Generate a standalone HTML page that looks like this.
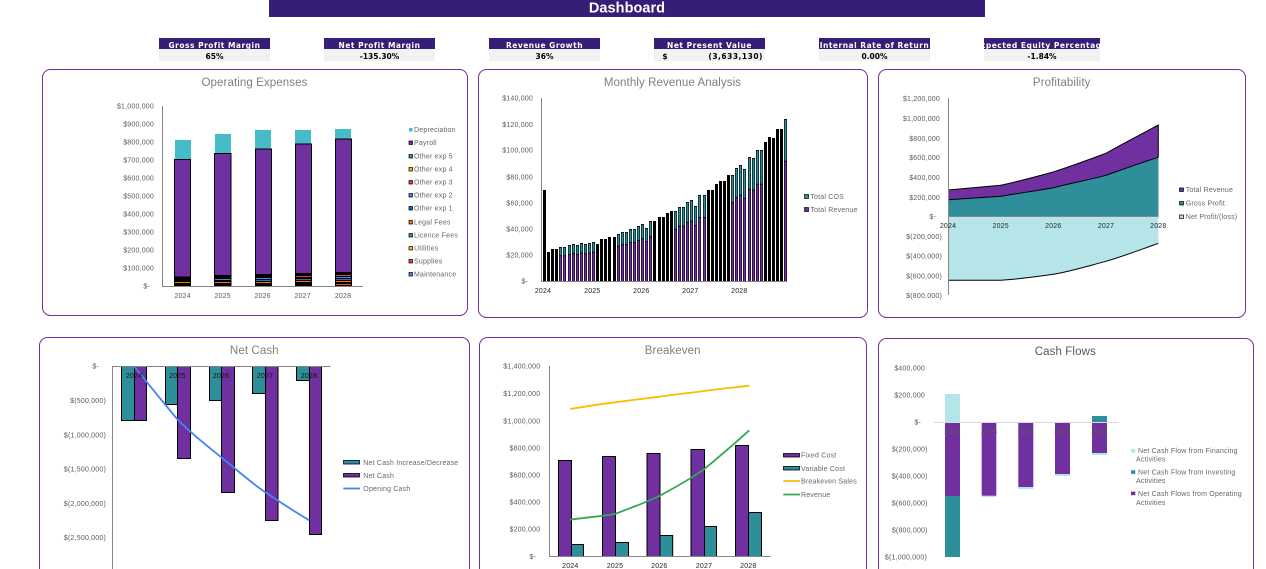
<!DOCTYPE html>
<html lang="en"><head><meta charset="utf-8"><title>Dashboard</title>
<style>
html,body{margin:0;padding:0;background:#fff;width:1266px;height:569px;overflow:hidden}
svg{display:block;position:absolute;left:0;top:0}
text{font-family:"Liberation Sans",Arial,sans-serif;font-size:7px;fill:#595959;letter-spacing:.2px}
.r{text-anchor:end}
.m{text-anchor:middle}
.t{font-size:11.5px;fill:#7f7f7f;text-anchor:middle;letter-spacing:.1px}
.l{fill:#666}
.k{font-family:"DejaVu Sans",sans-serif;font-weight:700;font-size:7.5px;text-anchor:middle;letter-spacing:0}
.kh{fill:#fff;letter-spacing:.5px}
.kv{fill:#000}
.card{fill:#fff;stroke:#7030a0;stroke-width:1}
.ax{stroke:#868686;stroke-width:1;fill:none}
.d{fill:#262626}
</style></head><body>
<svg width="1266" height="569" viewBox="0 0 1266 569" xmlns="http://www.w3.org/2000/svg">
<defs><clipPath id="kc"><rect x="984" y="38" width="116" height="11"/></clipPath></defs>
<!-- Header -->
<rect x="269" y="0" width="716" height="17" fill="#361d75"/>
<text x="627" y="12.5" class="m" style="font-size:14.5px;font-weight:700;fill:#fff;letter-spacing:.05px">Dashboard</text>
<!-- KPIs -->
<g fill="#361d75">
<rect x="159" y="38" width="111" height="11"/><rect x="324" y="38" width="111" height="11"/><rect x="489" y="38" width="111" height="11"/><rect x="654" y="38" width="111" height="11"/><rect x="819" y="38" width="111" height="11"/><rect x="984" y="38" width="116" height="11"/>
</g>
<g fill="#f2f2f2">
<rect x="159" y="49" width="111" height="12"/><rect x="324" y="49" width="111" height="12"/><rect x="489" y="49" width="111" height="12"/><rect x="654" y="49" width="111" height="12"/><rect x="819" y="49" width="111" height="12"/><rect x="984" y="49" width="116" height="12"/>
</g>
<text x="214.5" y="48" class="k kh">Gross Profit Margin</text>
<text x="379.5" y="48" class="k kh">Net Profit Margin</text>
<text x="544.5" y="48" class="k kh">Revenue Growth</text>
<text x="709.5" y="48" class="k kh">Net Present Value</text>
<text x="874.5" y="48" class="k kh">Internal Rate of Return</text>
<g clip-path="url(#kc)"><text x="1041" y="48" class="k kh">Expected Equity Percentage</text></g>
<text x="214.5" y="59" class="k kv">65%</text>
<text x="379.5" y="59" class="k kv">-135.30%</text>
<text x="544.5" y="59" class="k kv">36%</text>
<text x="665" y="59" class="k kv">$</text>
<text x="763" y="59" class="k kv" style="text-anchor:end;letter-spacing:.5px">(3,633,130)</text>
<text x="874.5" y="59" class="k kv">0.00%</text>
<text x="1042" y="59" class="k kv">-1.84%</text>

<!-- Cards -->
<rect class="card" x="42.5" y="69.5" width="425" height="246" rx="8"/>
<rect class="card" x="478.5" y="69.5" width="389" height="248" rx="8"/>
<rect class="card" x="878.5" y="69.5" width="367" height="248" rx="8"/>
<path class="card" d="M39.5 569V345.5a8 8 0 0 1 8-8H461.5a8 8 0 0 1 8 8V569"/>
<path class="card" d="M479.5 569V345.5a8 8 0 0 1 8-8H858.5a8 8 0 0 1 8 8V569"/>
<path class="card" d="M878.5 569V346.5a8 8 0 0 1 8-8H1245.5a8 8 0 0 1 8 8V569"/>

<!-- Operating Expenses -->
<text x="254.5" y="86" class="t">Operating Expenses</text>
<g class="r">
<text x="154" y="108.5" class="r">$1,000,000</text><text x="154" y="126.5" class="r">$900,000</text><text x="154" y="144.5" class="r">$800,000</text><text x="154" y="162.5" class="r">$700,000</text><text x="154" y="180.5" class="r">$600,000</text><text x="154" y="198.5" class="r">$500,000</text><text x="154" y="216.5" class="r">$400,000</text><text x="154" y="234.5" class="r">$300,000</text><text x="154" y="252.5" class="r">$200,000</text><text x="154" y="270.5" class="r">$100,000</text><text x="150" y="288.5" class="r">$-</text>
</g>
<g fill="#45bcc7">
<rect x="175" y="140" width="16" height="19"/><rect x="215" y="134" width="16" height="20"/><rect x="255" y="130" width="16" height="19"/><rect x="295" y="130" width="16" height="14"/><rect x="335" y="129" width="16" height="10"/>
</g>
<g fill="#000">
<rect x="174" y="159" width="17" height="127"/><rect x="214" y="153" width="17.5" height="133"/><rect x="255" y="148.5" width="17" height="137.5"/><rect x="295" y="143.5" width="17" height="142.5"/><rect x="335" y="138.5" width="17" height="147.5"/>
</g>
<g fill="#7030a0">
<rect x="175" y="160" width="15" height="116.5"/><rect x="215" y="154" width="15.5" height="121"/><rect x="256" y="149.5" width="15" height="124.5"/><rect x="296" y="144.5" width="15" height="128.5"/><rect x="336" y="139.5" width="15" height="132.5"/>
</g>
<g stroke-width="1" fill="none">
<path d="M175 282.5h15M215 282.5h15.5M256 282.5h15M296 281.5h15M336 281.5h15" stroke="#ff6d01"/>
<path d="M215 279.5h15.5M256 278.5h15" stroke="#4285f4"/>
<path d="M256 280.5h15M296 279.5h15M336 279.5h15" stroke="#1a78c2"/>
<path d="M296 276.5h15M336 275.5h15" stroke="#ea4335"/>
<path d="M336 277.5h15" stroke="#4285f4"/>
<path d="M336 284.5h15" stroke="#e8522f"/>
</g>
<path class="ax" d="M162.5 106V286.5H363"/>
<text x="182.7" y="298" class="m">2024</text><text x="222.7" y="298" class="m">2025</text><text x="262.7" y="298" class="m">2026</text><text x="302.7" y="298" class="m">2027</text><text x="343" y="298" class="m">2028</text>
<g stroke="#000" stroke-width=".7">
<rect x="409" y="128" width="3.5" height="3.5" fill="#45bcc7" stroke="none"/>
<rect x="409" y="141" width="3.5" height="3.5" fill="#7030a0"/>
<rect x="409" y="154.5" width="3.5" height="3.5" fill="#34a853"/>
<rect x="409" y="167.5" width="3.5" height="3.5" fill="#fbbc04"/>
<rect x="409" y="180.5" width="3.5" height="3.5" fill="#ea4335"/>
<rect x="409" y="193.5" width="3.5" height="3.5" fill="#4285f4"/>
<rect x="409" y="206.5" width="3.5" height="3.5" fill="#0a6ebd"/>
<rect x="409" y="220.5" width="3.5" height="3.5" fill="#ff6d01"/>
<rect x="409" y="233.5" width="3.5" height="3.5" fill="#34a853"/>
<rect x="409" y="246.5" width="3.5" height="3.5" fill="#fbbc04"/>
<rect x="409" y="259.5" width="3.5" height="3.5" fill="#ea4335"/>
<rect x="409" y="272.5" width="3.5" height="3.5" fill="#4285f4"/>
</g>
<text x="414" y="132" class="l">Depreciation</text><text x="414" y="145" class="l">Payroll</text><text x="414" y="158.5" class="l">Other exp 5</text><text x="414" y="171.5" class="l">Other exp 4</text><text x="414" y="184.5" class="l">Other exp 3</text><text x="414" y="197.5" class="l">Other exp 2</text><text x="414" y="210.5" class="l">Other exp 1</text><text x="414" y="224.5" class="l">Legal Fees</text><text x="414" y="237.5" class="l">Licence Fees</text><text x="414" y="250.5" class="l">Utilities</text><text x="414" y="263.5" class="l">Supplies</text><text x="414" y="276.5" class="l">Maintenance</text>

<!-- Monthly Revenue -->
<text x="672.5" y="86" class="t">Monthly Revenue Analysis</text>
<text x="533" y="100.5" class="r">$140,000</text><text x="533" y="127" class="r">$120,000</text><text x="533" y="152.7" class="r">$100,000</text><text x="533" y="179.7" class="r">$80,000</text><text x="533" y="205.7" class="r">$60,000</text><text x="533" y="231.7" class="r">$40,000</text><text x="533" y="257.7" class="r">$20,000</text><text x="528" y="283.7" class="r">$-</text>
<path fill="#000" d="M543 190h3V281h-3zM547 252h3V281h-3zM551 249h3V281h-3zM555 249h3V281h-3zM559 247h3V281h-3zM563 247h3V281h-3zM568 245h3V281h-3zM572 244h3V281h-3zM576 245h3V281h-3zM580 243h3V281h-3zM584 244h3V281h-3zM588 243h3V281h-3zM592 242h3V281h-3zM596 244h3V281h-3zM600 239h3V281h-3zM604 239h3V281h-3zM608 237h3V281h-3zM613 237h3V281h-3zM617 234h3V281h-3zM621 232h3V281h-3zM625 232h3V281h-3zM629 229h3V281h-3zM633 229h3V281h-3zM637 226h3V281h-3zM641 224h3V281h-3zM645 228h3V281h-3zM649 221h3V281h-3zM653 221h3V281h-3zM658 217h3V281h-3zM662 217h3V281h-3zM666 213h3V281h-3zM670 211h3V281h-3zM674 211h3V281h-3zM678 207h3V281h-3zM682 207h3V281h-3zM686 202h3V281h-3zM690 200h3V281h-3zM694 206h3V281h-3zM698 195h3V281h-3zM703 195h3V281h-3zM707 190h3V281h-3zM711 190h3V281h-3zM715 184h3V281h-3zM719 181h3V281h-3zM723 181h3V281h-3zM727 175h3V281h-3zM731 175h3V281h-3zM735 168h3V281h-3zM739 165h3V281h-3zM743 169h3V281h-3zM748 157h3V281h-3zM752 158h3V281h-3zM756 150h3V281h-3zM760 150h3V281h-3zM764 142h3V281h-3zM768 137h3V281h-3zM772 138h3V281h-3zM776 129h3V281h-3zM780 129h3V281h-3zM784 119h3V281h-3z"/>
<path fill="none" stroke="#2e8f9a" stroke-width="1.8" d="M560.5 247.8V255.4M564.5 247.8V255.4M569.5 245.8V254M573.5 244.8V253.2M577.5 245.8V254M581.5 243.8V252.5M585.5 244.8V253.2M589.5 243.8V252.5M593.5 242.8V251.7M618.5 234.8V245.8M622.5 232.8V244.3M626.5 232.8V244.3M630.5 229.8V242.1M634.5 229.8V242.1M638.5 226.8V239.9M642.5 224.8V238.4M646.5 228.8V241.4M650.5 221.8V236.2M675.5 211.8V228.8M679.5 207.8V225.8M683.5 207.8V225.8M687.5 202.8V222.1M691.5 200.8V220.7M695.5 206.8V225.1M699.5 195.8V217M704.5 195.8V217M732.5 175.8V202.2M736.5 168.8V197M740.5 165.8V194.8M744.5 169.8V197.7M749.5 157.8V188.8M753.5 158.8V189.6M757.5 150.8V183.7M761.5 150.8V183.7M785.5 119.8V160.7"/>
<path fill="none" stroke="#7030a0" stroke-width="1.8" d="M560.5 256.3V281M564.5 256.3V281M569.5 254.9V281M573.5 254.1V281M577.5 254.9V281M581.5 253.4V281M585.5 254.1V281M589.5 253.4V281M593.5 252.6V281M618.5 246.7V281M622.5 245.2V281M626.5 245.2V281M630.5 243V281M634.5 243V281M638.5 240.8V281M642.5 239.3V281M646.5 242.3V281M650.5 237.1V281M675.5 229.7V281M679.5 226.7V281M683.5 226.7V281M687.5 223V281M691.5 221.6V281M695.5 226V281M699.5 217.9V281M704.5 217.9V281M732.5 203.1V281M736.5 197.9V281M740.5 195.7V281M744.5 198.6V281M749.5 189.7V281M753.5 190.5V281M757.5 184.6V281M761.5 184.6V281M785.5 161.6V281"/>
<path class="ax" d="M541.5 98V281.5H787"/>
<text x="543" y="293" class="m d">2024</text><text x="592.3" y="293" class="m d">2025</text><text x="641.3" y="293" class="m d">2026</text><text x="690.3" y="293" class="m d">2027</text><text x="739.3" y="293" class="m d">2028</text>
<rect x="804.5" y="194.5" width="4" height="4" fill="#2e8f9a" stroke="#000" stroke-width=".7"/>
<rect x="804.5" y="207.5" width="4" height="4" fill="#7030a0" stroke="#000" stroke-width=".7"/>
<text x="810.3" y="198.8" class="l">Total COS</text><text x="810.3" y="211.8" class="l">Total Revenue</text>

<!-- Profitability -->
<text x="1061.7" y="86" class="t">Profitability</text>
<text x="940" y="100.8" class="r">$1,200,000</text><text x="940" y="120.8" class="r">$1,000,000</text><text x="940" y="140.8" class="r">$800,000</text><text x="940" y="159.8" class="r">$600,000</text><text x="940" y="179.8" class="r">$400,000</text><text x="940" y="199.8" class="r">$200,000</text><text x="936" y="219.2" class="r">$-</text><text x="942" y="238.8" class="r">$(200,000)</text><text x="942" y="258.5" class="r">$(400,000)</text><text x="942" y="278.5" class="r">$(600,000)</text><text x="942" y="298.2" class="r">$(800,000)</text>
<path fill="#7030a0" d="M948.3 190L1000.7 185.3C1020 181 1035 177 1053.3 172C1072 166 1088 160 1106 153.3C1124 143 1140 135 1158.3 125V216.3H948.3Z"/>
<path fill="#2e8f9a" d="M948.3 199.7L1000.7 196.3C1020 193 1035 191 1053.3 187.7C1072 183 1088 180 1106 175.3C1124 169 1140 163 1158.3 157.3V216.3H948.3Z"/>
<path fill="#b5e5e9" d="M948.3 216.3H1158.3V243.3C1140 250 1124 256 1106 261.3C1088 266 1072 271 1053.3 274.3C1035 277 1018 279 1000.7 280.3H948.3Z"/>
<path fill="none" stroke="#000" stroke-width="1" d="M948.3 190L1000.7 185.3C1020 181 1035 177 1053.3 172C1072 166 1088 160 1106 153.3C1124 143 1140 135 1158.3 125V157.3"/>
<path fill="none" stroke="#000" stroke-width="1" d="M948.3 199.7L1000.7 196.3C1020 193 1035 191 1053.3 187.7C1072 183 1088 180 1106 175.3C1124 169 1140 163 1158.3 157.3"/>
<path fill="none" stroke="#000" stroke-width="1" d="M948.3 280.3H1000.7C1018 279 1035 277 1053.3 274.3C1072 271 1088 266 1106 261.3C1124 256 1140 250 1158.3 243.3"/>
<path class="ax" d="M948.5 98V295M948 216.5H1158.5"/>
<text x="948" y="228" class="m d">2024</text><text x="1000.7" y="228" class="m d">2025</text><text x="1053.3" y="228" class="m d">2026</text><text x="1106" y="228" class="m d">2027</text><text x="1158.3" y="228" class="m d">2028</text>
<g stroke="#000" stroke-width=".7"><rect x="1179.5" y="188" width="4" height="3.5" fill="#7030a0"/><rect x="1179.5" y="201.5" width="4" height="3.5" fill="#2e8f9a"/><rect x="1179.5" y="215" width="4" height="3.5" fill="#b5e5e9"/></g>
<text x="1185.7" y="192" class="l">Total Revenue</text><text x="1185.7" y="205.6" class="l">Gross Profit</text><text x="1185.7" y="219" class="l">Net Profit/(loss)</text>

<!-- Net Cash -->
<text x="254.3" y="354" class="t">Net Cash</text>
<text x="99" y="368.7" class="r">$-</text><text x="106" y="403" class="r">$(500,000)</text><text x="106" y="437.6" class="r">$(1,000,000)</text><text x="106" y="471.6" class="r">$(1,500,000)</text><text x="106" y="506" class="r">$(2,000,000)</text><text x="106" y="540" class="r">$(2,500,000)</text>
<g stroke="#000" stroke-width="1">
<rect x="121.5" y="366.5" width="13" height="54" fill="#2e8f9a"/><rect x="134.5" y="366.5" width="12" height="54" fill="#7030a0"/>
<rect x="165.5" y="366.5" width="12" height="38" fill="#2e8f9a"/><rect x="177.5" y="366.5" width="13" height="92" fill="#7030a0"/>
<rect x="209.5" y="366.5" width="12" height="34" fill="#2e8f9a"/><rect x="221.5" y="366.5" width="13" height="126" fill="#7030a0"/>
<rect x="252.5" y="366.5" width="13" height="27" fill="#2e8f9a"/><rect x="265.5" y="366.5" width="12.5" height="154" fill="#7030a0"/>
<rect x="296.5" y="366.5" width="13" height="14" fill="#2e8f9a"/><rect x="309.5" y="366.5" width="12" height="168" fill="#7030a0"/>
</g>
<path class="ax" d="M112.5 569V366.5H330.7"/>
<path fill="none" stroke="#4285f4" stroke-width="1.8" d="M134.3 366.3C148 384 164 403 177.3 419.3C192 434 206 445 221.3 457.3C236 469 250 482 265.3 492.3C280 502 295 512 309.3 520.3"/>
<g style="letter-spacing:.2px">
<text x="134" y="378" class="m" style="fill:#111">2024</text><text x="177.3" y="378" class="m" style="fill:#111">2025</text><text x="221" y="378" class="m" style="fill:#111">2026</text><text x="265" y="378" class="m" style="fill:#111">2027</text><text x="309" y="378" class="m" style="fill:#111">2028</text>
</g>
<rect x="343.5" y="460.5" width="16" height="3.5" fill="#2e8f9a" stroke="#000" stroke-width=".8"/>
<rect x="343.5" y="473.5" width="16" height="3.5" fill="#7030a0" stroke="#000" stroke-width=".8"/>
<path d="M343.3 488.5H360" stroke="#4285f4" stroke-width="1.8"/>
<text x="363.3" y="465" class="l">Net Cash Increase/Decrease</text><text x="363.3" y="478" class="l">Net Cash</text><text x="363.3" y="491" class="l">Opening Cash</text>

<!-- Breakeven -->
<text x="672.7" y="354" class="t">Breakeven</text>
<text x="540.3" y="368.7" class="r">$1,400,000</text><text x="540.3" y="396.2" class="r">$1,200,000</text><text x="540.3" y="423.7" class="r">$1,000,000</text><text x="540.3" y="450.7" class="r">$800,000</text><text x="540.3" y="477.7" class="r">$600,000</text><text x="540.3" y="504.7" class="r">$400,000</text><text x="540.3" y="531.7" class="r">$200,000</text><text x="536" y="559.2" class="r">$-</text>
<g stroke="#000" stroke-width="1">
<rect x="558.5" y="460.5" width="13" height="96" fill="#7030a0"/><rect x="571.5" y="544.5" width="12" height="12" fill="#2e8f9a"/>
<rect x="602.5" y="456.5" width="13" height="100" fill="#7030a0"/><rect x="615.5" y="542.5" width="13" height="14" fill="#2e8f9a"/>
<rect x="647" y="453.5" width="13" height="103" fill="#7030a0"/><rect x="660" y="535.5" width="12.7" height="21" fill="#2e8f9a"/>
<rect x="691" y="449.5" width="13.5" height="107" fill="#7030a0"/><rect x="704.5" y="526.5" width="12" height="30" fill="#2e8f9a"/>
<rect x="735.5" y="445.5" width="13" height="111" fill="#7030a0"/><rect x="748.5" y="512.5" width="13" height="44" fill="#2e8f9a"/>
</g>
<path class="ax" d="M549.5 366V556.5H770.7"/>
<path fill="none" stroke="#fbbc04" stroke-width="1.8" d="M570.3 409C585 406.5 600 404 615 402.3C630 400.5 645 398.5 659.3 396.7C674 394.5 689 393 704 391C719 389 734 387.5 749.3 385.7"/>
<path fill="none" stroke="#34a853" stroke-width="1.8" d="M570.3 519.7C585 517.5 600 516.5 615 514C630 508 645 503 659.3 496C674 488 689 480 704 469.3C719 457 734 444 749.3 430.3"/>
<text x="570.3" y="568" class="m d">2024</text><text x="615" y="568" class="m d">2025</text><text x="659.3" y="568" class="m d">2026</text><text x="704" y="568" class="m d">2027</text><text x="748.3" y="568" class="m d">2028</text>
<rect x="783.5" y="453.5" width="16" height="3.5" fill="#7030a0" stroke="#000" stroke-width=".8"/>
<rect x="783.5" y="466.5" width="16" height="3.5" fill="#2e8f9a" stroke="#000" stroke-width=".8"/>
<path d="M783.3 481H800" stroke="#fbbc04" stroke-width="1.8"/><path d="M783.3 494.5H800" stroke="#34a853" stroke-width="1.8"/>
<text x="801" y="457.5" class="l">Fixed Cost</text><text x="801" y="470.8" class="l">Variable Cost</text><text x="801" y="483.5" class="l">Breakeven Sales</text><text x="801" y="497" class="l">Revenue</text>

<!-- Cash Flows -->
<text x="1065.3" y="355" class="t" style="fill:#595959">Cash Flows</text>
<text x="925" y="370.7" class="r">$400,000</text><text x="925" y="397.7" class="r">$200,000</text><text x="921" y="424.7" class="r">$-</text><text x="927.7" y="451.7" class="r">$(200,000)</text><text x="927.7" y="478.7" class="r">$(400,000)</text><text x="927.7" y="505.7" class="r">$(600,000)</text><text x="927.7" y="532.7" class="r">$(800,000)</text><text x="927" y="559.7" class="r">$(1,000,000)</text>
<g fill="#b5e5e9"><rect x="945" y="394" width="15" height="28.3"/><rect x="981.7" y="495.7" width="14.6" height="1.3"/><rect x="1018.3" y="487" width="15" height="2"/><rect x="1055" y="474" width="15" height="2"/><rect x="1092" y="453" width="15" height="2"/></g>
<g fill="#7030a0"><rect x="945" y="423" width="15" height="73"/><rect x="981.7" y="423" width="14.6" height="72.7"/><rect x="1018.3" y="423" width="15" height="64"/><rect x="1055" y="423" width="15" height="51"/><rect x="1092" y="423" width="15" height="30"/></g>
<g fill="#2e8f9a"><rect x="945" y="496" width="15" height="61"/><rect x="1092" y="416" width="15" height="6"/></g>
<path d="M933.7 422.5H1118.7" stroke="#d9d9d9" stroke-width="1"/>
<text x="952.3" y="434" class="m">2024</text><text x="989" y="434" class="m">2025</text><text x="1025.7" y="434" class="m">2026</text><text x="1062.3" y="434" class="m">2027</text><text x="1099.3" y="434" class="m">2028</text>
<rect x="1131" y="449" width="4.3" height="3.6" fill="#b5e5e9"/><rect x="1131" y="470.3" width="4.3" height="3.6" fill="#2e8f9a"/><rect x="1131" y="491.6" width="4.3" height="3.6" fill="#7030a0"/>
<text x="1138" y="453" class="l">Net Cash Flow from Financing</text><text x="1136" y="461.6" class="l">Activities</text>
<text x="1138" y="474.6" class="l">Net Cash Flow from Investing</text><text x="1136" y="483" class="l">Activities</text>
<text x="1138" y="496" class="l">Net Cash Flows from Operating</text><text x="1136" y="505" class="l">Activities</text>
</svg>
</body></html>
